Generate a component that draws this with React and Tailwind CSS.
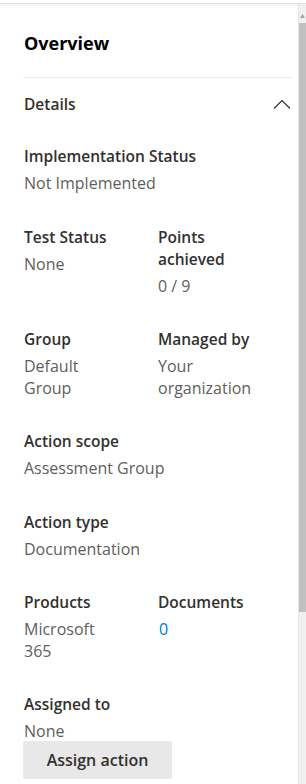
export default function App() {
  const font = { fontFamily: '"Open Sans", "Noto Sans", sans-serif' };

  return (
    <div
      className="w-[306px] h-[784px] overflow-hidden bg-white flex flex-col"
      style={font}
    >
      {/* top edge shadow */}
      <div className="h-[3px] shrink-0" />
      <div className="h-px shrink-0 bg-[#e1e1e1] shadow-[0_1px_2px_rgba(0,0,0,0.12)]" />

      <div className="flex flex-1 min-h-0">
        {/* Panel content */}
        <div className="flex-1 pl-6 pr-[6px]">
          <h1 className="mt-[27px] text-[18px] leading-[24px] font-bold text-black">
            Overview
          </h1>
          <div className="mt-[22px] h-px bg-[#edebe9] -ml-px" />

          {/* Details header */}
          <div className="mt-[16px] flex items-center justify-between">
            <span className="text-[15.5px] leading-[20px] font-semibold text-[#323130]">
              Details
            </span>
            <svg width="18" height="10" viewBox="0 0 18 10" className="mr-[1px]">
              <path
                d="M1 9.5 L9 1.5 L17 9.5"
                fill="none"
                stroke="#323130"
                strokeWidth="1.2"
              />
            </svg>
          </div>

          <div className="mt-[31px] flex flex-col gap-[31px]">
            <Field label="Implementation Status" value="Not Implemented" />

            <div className="flex">
              <Field label="Test Status" value="None" className="w-[134px]" />
              <Field label="Points achieved" value="0 / 9" className="w-[100px]" />
            </div>

            <div className="flex">
              <Field label="Group" value="Default Group" className="w-[134px] pr-[40px]" />
              <Field label="Managed by" value="Your organization" className="w-[100px]" />
            </div>

            <Field label="Action scope" value="Assessment Group" />
            <Field label="Action type" value="Documentation" />

            <div className="flex">
              <Field label="Products" value="Microsoft 365" className="w-[134px] pr-[40px]" />
              <Field label="Documents" value="0" link className="w-[100px]" />
            </div>

            <div>
              <Field label="Assigned to" value="None" />
              <button className="-mt-[2px] ml-[-1px] w-[149px] h-[38px] rounded-[2px] bg-[#e8e8e8] text-[16px] font-semibold text-[#323130]">
                Assign action
              </button>
            </div>
          </div>
        </div>

        {/* Scrollbar */}
        <div className="w-[8px] shrink-0 bg-[#f0f0f0] border-l border-[#e6e6e6] flex flex-col items-center">
          <div className="h-[10px]" />
          <svg width="5" height="4" viewBox="0 0 5 4">
            <path d="M0 4 L2.5 0 L5 4 Z" fill="#a3a3a3" />
          </svg>
          <div className="mt-[5px] w-full h-[589px] bg-[#c1c1c1]" />
        </div>
      </div>
    </div>
  );
}

function Field({ label, value, link, className = "" }) {
  return (
    <div className={className}>
      <div className="text-[15.5px] leading-[22px] font-semibold text-[#323130]">
        {label}
      </div>
      <div
        className={
          "mt-[6px] text-[16px] leading-[21.5px] " +
          (link ? "text-[#0078d4] pl-[1px]" : "text-[#605e5c]")
        }
      >
        {value}
      </div>
    </div>
  );
}
